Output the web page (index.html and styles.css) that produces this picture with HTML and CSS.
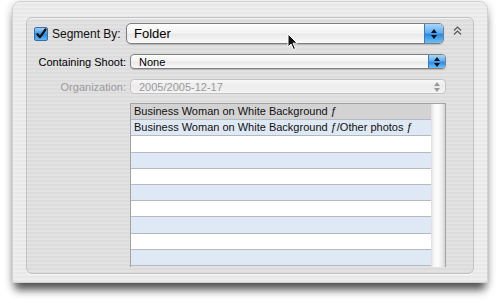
FILE: index.html
```html
<!DOCTYPE html>
<html>
<head>
  <meta charset="UTF-8">
  <title>Segment By</title>
  <link rel="stylesheet" href="styles.css">
</head>
<body>
  <div class="window">
    <div class="group">

      <!-- Segment By row -->
      <div class="row row-main">
        <label class="check-label">
          <span class="checkbox">
            <svg viewBox="0 0 12 12" width="12" height="12">
              <path d="M2.5 6.2 L5 9.2 L10.5 1.5" fill="none" stroke="#111" stroke-width="2.2" stroke-linecap="round" stroke-linejoin="round"/>
            </svg>
          </span>
          Segment By:
        </label>
        <div class="popup popup-large">
          <span class="popup-text">Folder</span>
          <span class="stepper"><i class="up"></i><i class="down"></i></span>
        </div>
        <svg class="collapse" viewBox="0 0 9 9" width="9" height="9">
          <polyline points="1,4.5 4.5,1 8,4.5" fill="none" stroke="#555" stroke-width="1.1"/>
          <polyline points="1,8.5 4.5,5 8,8.5" fill="none" stroke="#555" stroke-width="1.1"/>
        </svg>
      </div>

      <div class="row">
        <span class="field-label">Containing Shoot:</span>
        <div class="popup">
          <span class="popup-text">None</span>
          <span class="stepper"><i class="up"></i><i class="down"></i></span>
        </div>
      </div>

      <div class="row">
        <span class="field-label disabled">Organization:</span>
        <div class="popup popup-disabled">
          <span class="popup-text">2005/2005-12-17</span>
          <span class="stepper"><i class="up"></i><i class="down"></i></span>
        </div>
      </div>

      <!-- folder list -->
      <div class="list">
        <div class="rows">
          <div class="list-row selected">Business Woman on White Background ƒ</div>
          <div class="list-row">Business Woman on White Background ƒ/Other photos ƒ</div>
          <div class="list-row"></div>
          <div class="list-row"></div>
          <div class="list-row"></div>
          <div class="list-row"></div>
          <div class="list-row"></div>
          <div class="list-row"></div>
          <div class="list-row"></div>
          <div class="list-row"></div>
        </div>
        <div class="scroll-track"></div>
      </div>

    </div>
  </div>

  <svg class="cursor" viewBox="0 0 12 18" width="12" height="18">
    <path d="M1 1 L1 14 L4 11 L6.5 16.5 L8.5 15.6 L6 10.2 L10.2 10.2 Z" fill="#111" stroke="#fff" stroke-width="1"/>
  </svg>
</body>
</html>
```

FILE: styles.css
```css
body {
  margin: 0;
  background-color: #fff;
  font-family: "Liberation Sans", Arial, sans-serif;
  color: #1b1b1b;
  position: relative;
  height: 303px;
  overflow: hidden;
}

.window {
  margin: 1px 12px 0;
  height: 282px;
  box-sizing: border-box;
  padding: 15px 13px 0;
  border: 1px solid #d2d2d2;
  border-radius: 8px 8px 3px 3px;
  background: repeating-linear-gradient(to bottom, #eeeeee 0, #eeeeee 2px, #e8e8e8 2px, #e8e8e8 4px);
  box-shadow: 0 10px 9px -3px rgba(0, 0, 0, 0.62), 0 2px 10px rgba(0, 0, 0, 0.22);
}

.group {
  height: 257px;
  box-sizing: border-box;
  border: 1px solid #c2c2c2;
  border-radius: 6px;
  background: repeating-linear-gradient(to bottom, #e2e2e2 0, #e2e2e2 2px, #dcdcdc 2px, #dcdcdc 4px);
  box-shadow: inset 0 1px 0 rgba(255, 255, 255, 0.5), 0 1px 0 #f6f6f6;
  padding-top: 5px;
}

.row {
  display: flex;
  align-items: center;
  height: 15px;
  margin-top: 9px;
  padding-right: 27px;
}

.row + .row {
  margin-top: 10px;
}

.row-main {
  height: 21px;
  margin-top: 0;
  padding-right: 0;
}

.check-label {
  display: flex;
  align-items: center;
  gap: 4px;
  width: 99px;
  box-sizing: border-box;
  padding-left: 7px;
  font-size: 12px;
  white-space: nowrap;
  color: #111;
}

.checkbox {
  width: 12px;
  height: 12px;
  border: 1px solid #3a6ea8;
  border-radius: 2px;
  background: linear-gradient(to bottom, #9fd1fb, #2f8de6 55%, #66b4f4);
  display: flex;
}

.field-label {
  width: 103px;
  padding-right: 4px;
  box-sizing: border-box;
  text-align: right;
  font-size: 11px;
  white-space: nowrap;
  color: #000;
}

.field-label.disabled {
  color: #9b9b9b;
}

.popup {
  flex: 1;
  height: 100%;
  box-sizing: border-box;
  display: flex;
  align-items: center;
  border: 1px solid #7f7f7f;
  border-radius: 4px;
  background: linear-gradient(to bottom, #fff 0, #f4f4f4 45%, #e9e9e9 55%, #fafafa 100%);
  box-shadow: 0 1px 1px rgba(0, 0, 0, 0.18);
  overflow: hidden;
  font-size: 11px;
  color: #000;
}

.popup-large {
  font-size: 13px;
  border-radius: 5px;
}

.popup-text {
  flex: 1;
  padding-left: 8px;
}

.popup-large .popup-text {
  padding-left: 7px;
}

.stepper {
  width: 16px;
  height: 100%;
  display: flex;
  flex-direction: column;
  align-items: center;
  justify-content: center;
  gap: 2px;
  background: linear-gradient(to bottom, #a8d6fb 0, #5fb0f4 45%, #2a8ae6 55%, #6cc0fa 100%);
  border-left: 1px solid #3d78b8;
}

.popup-large .stepper {
  width: 18px;
}

.stepper i {
  width: 0;
  height: 0;
  border-left: 3px solid transparent;
  border-right: 3px solid transparent;
}

.stepper .up {
  border-bottom: 4px solid #111;
}

.stepper .down {
  border-top: 4px solid #111;
}

.popup-disabled {
  border-color: #c4c4c4;
  background: linear-gradient(to bottom, #f7f7f7, #ececec 50%, #f4f4f4);
  box-shadow: none;
  color: #9a9a9a;
}

.popup-disabled .stepper {
  background: none;
  border-left: none;
}

.popup-disabled .stepper .up {
  border-bottom-color: #999;
}

.popup-disabled .stepper .down {
  border-top-color: #999;
}

.collapse {
  margin: 0 11px 6px 9px;
}

.list {
  display: flex;
  margin: 9px 27px 0 103px;
  height: 163px;
  border: 1px solid #a3a3a3;
  border-bottom: none;
  overflow: hidden;
}

.rows {
  flex: 1;
}

.list-row {
  height: 15.2px;
  border-bottom: 1px solid #b5b9c0;
  padding-left: 3px;
  font-size: 11px;
  line-height: 15px;
  white-space: nowrap;
  color: #111;
  background-color: #fff;
}

.list-row:nth-child(even) {
  background-color: #dfe9f5;
}

.list-row.selected {
  background-color: #d3d3d3;
}

.scroll-track {
  width: 14px;
  background: linear-gradient(to right, #dcdcdc 0, #f6f6f6 20%, #fdfdfd 50%, #ebebeb 80%, #d4d4d4 100%);
}

.cursor {
  position: absolute;
  left: 287px;
  top: 33px;
}
```
